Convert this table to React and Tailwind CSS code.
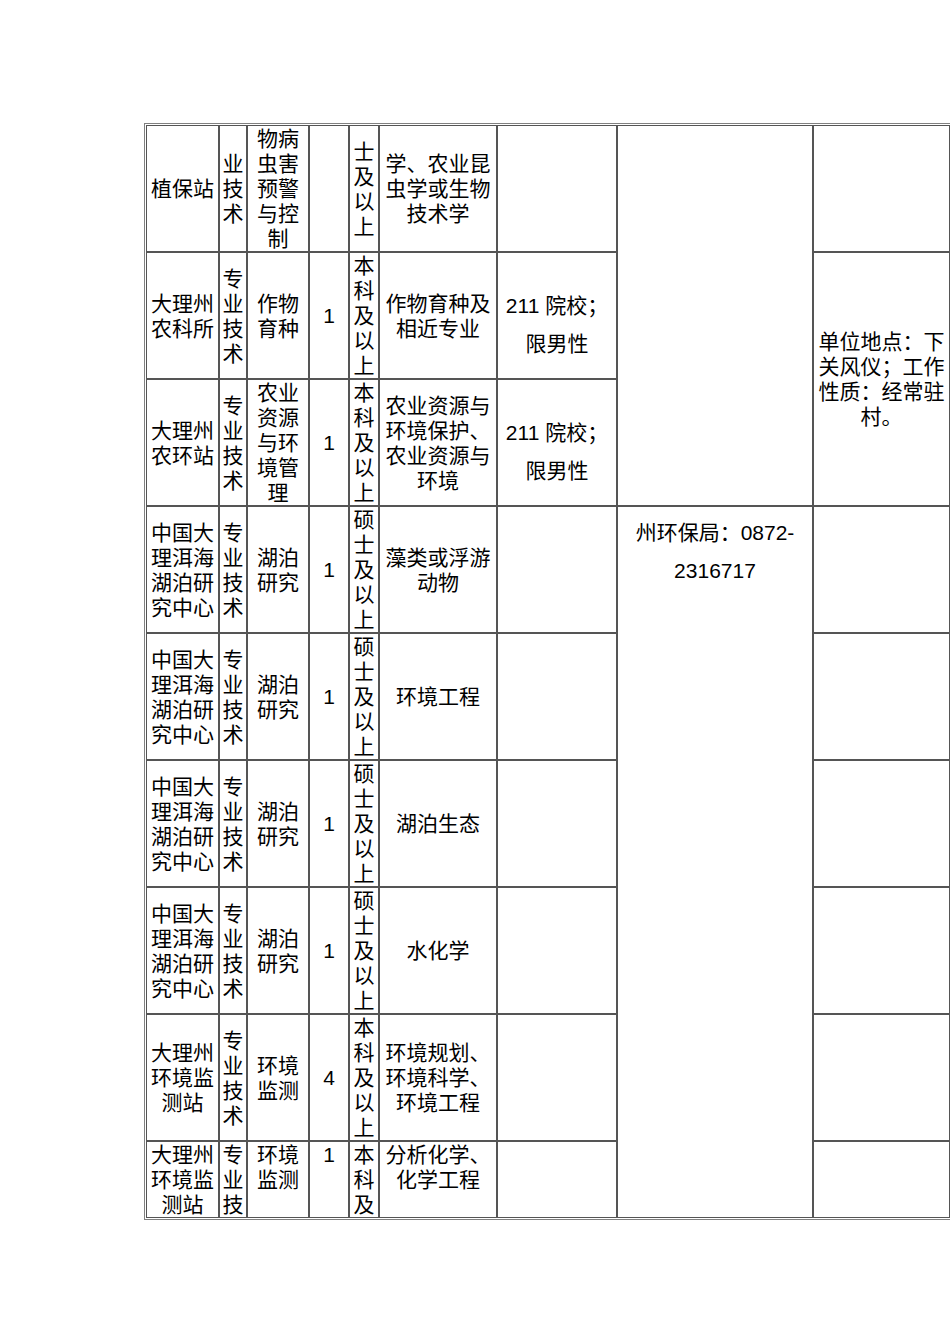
import React from "react";

const widths = [
  "w-[73px]",
  "w-[28px]",
  "w-[62px]",
  "w-[40px]",
  "w-[30px]",
  "w-[118px]",
  "w-[120px]",
  "w-[196px]",
  "w-[137px]",
];

const lake = {
  unit: "中国大\n理洱海\n湖泊研\n究中心",
  kind: "专\n业\n技\n术",
  post: "湖泊\n研究",
  num: "1",
  edu: "硕\n士\n及\n以\n上",
};

const Cell = ({ children, rowSpan, className = "" }) => (
  <td
    rowSpan={rowSpan}
    className={`border border-[#555555] p-0 text-center whitespace-pre ${className}`}
  >
    {children}
  </td>
);

const App = () => {
  return (
    <div className="w-[950px] h-[1344px] overflow-hidden bg-white text-black font-['Liberation_Sans','Noto_Sans_CJK_SC',sans-serif] text-[21px] leading-[25px]">
      <div className="pt-[123px] pl-[144px]">
        <div className="w-[808px] border border-[#808080] p-[1px]">
          <table className="table-fixed border-separate border-spacing-0 w-[804px]">
            <colgroup>
              {widths.map((w, i) => (
                <col key={i} className={w} />
              ))}
            </colgroup>
            <tbody className="align-middle">
              {/* row 1 - continued from previous page */}
              <tr>
                <Cell>植保站</Cell>
                <Cell>{"业\n技\n术"}</Cell>
                <Cell>{"物病\n虫害\n预警\n与控\n制"}</Cell>
                <Cell></Cell>
                <Cell>{"士\n及\n以\n上"}</Cell>
                <Cell>{"学、农业昆\n虫学或生物\n技术学"}</Cell>
                <Cell></Cell>
                <Cell rowSpan={3}></Cell>
                <Cell></Cell>
              </tr>
              <tr>
                <Cell>{"大理州\n农科所"}</Cell>
                <Cell>{"专\n业\n技\n术"}</Cell>
                <Cell>{"作物\n育种"}</Cell>
                <Cell>1</Cell>
                <Cell>{"本\n科\n及\n以\n上"}</Cell>
                <Cell>{"作物育种及\n相近专业"}</Cell>
                <Cell className="leading-[38px] pt-[19px]">
                  {"211 院校；\n限男性"}
                </Cell>
                <Cell rowSpan={2} className="overflow-visible">
                  {"单位地点：下\n关风仪；工作\n性质：经常驻\n村。"}
                </Cell>
              </tr>
              <tr>
                <Cell>{"大理州\n农环站"}</Cell>
                <Cell>{"专\n业\n技\n术"}</Cell>
                <Cell>{"农业\n资源\n与环\n境管\n理"}</Cell>
                <Cell>1</Cell>
                <Cell>{"本\n科\n及\n以\n上"}</Cell>
                <Cell>{"农业资源与\n环境保护、\n农业资源与\n环境"}</Cell>
                <Cell className="leading-[38px] pt-[19px]">
                  {"211 院校；\n限男性"}
                </Cell>
              </tr>
              {["藻类或浮游\n动物", "环境工程", "湖泊生态", "水化学"].map(
                (major, i) => (
                  <tr key={major}>
                    <Cell>{lake.unit}</Cell>
                    <Cell>{lake.kind}</Cell>
                    <Cell>{lake.post}</Cell>
                    <Cell>{lake.num}</Cell>
                    <Cell>{lake.edu}</Cell>
                    <Cell>{major}</Cell>
                    <Cell></Cell>
                    {i === 0 && (
                      <Cell
                        rowSpan={6}
                        className="align-top pt-[7px] leading-[38px]"
                      >
                        {"州环保局：0872-\n2316717"}
                      </Cell>
                    )}
                    <Cell></Cell>
                  </tr>
                )
              )}
              <tr>
                <Cell>{"大理州\n环境监\n测站"}</Cell>
                <Cell>{"专\n业\n技\n术"}</Cell>
                <Cell>{"环境\n监测"}</Cell>
                <Cell>4</Cell>
                <Cell>{"本\n科\n及\n以\n上"}</Cell>
                <Cell>{"环境规划、\n环境科学、\n环境工程"}</Cell>
                <Cell></Cell>
                <Cell></Cell>
              </tr>
              <tr className="align-top">
                <Cell className="align-top">{"大理州\n环境监\n测站"}</Cell>
                <Cell className="align-top">{"专\n业\n技"}</Cell>
                <Cell className="align-top">{"环境\n监测"}</Cell>
                <Cell className="align-top">1</Cell>
                <Cell className="align-top">{"本\n科\n及"}</Cell>
                <Cell className="align-top">{"分析化学、\n化学工程"}</Cell>
                <Cell></Cell>
                <Cell></Cell>
              </tr>
            </tbody>
          </table>
        </div>
      </div>
    </div>
  );
};

export default App;
